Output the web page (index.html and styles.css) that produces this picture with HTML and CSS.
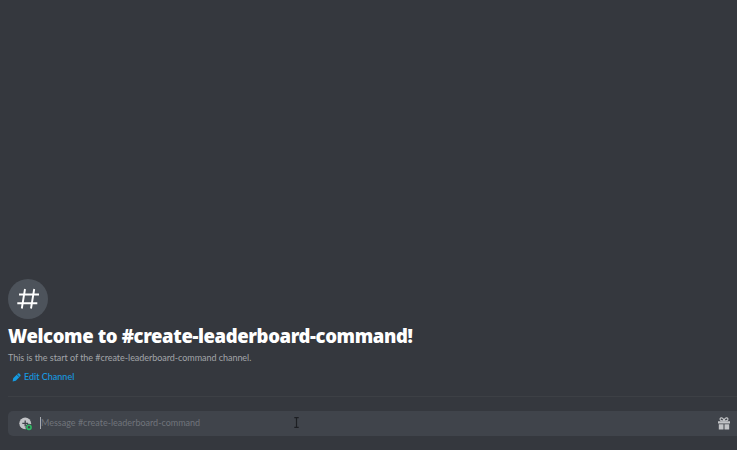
FILE: index.html
```
<!DOCTYPE html>
<html lang="en">
<head>
<meta charset="utf-8">
<title>create-leaderboard-command</title>
<link rel="stylesheet" href="styles.css">
</head>
<body>
<main class="chat">
  <section class="welcome">
    <div class="channel-icon">
      <svg width="40" height="40" viewBox="0 0 40 40" fill="none" stroke="#fff" stroke-width="1.9"><path d="M17 10 13.8 29.5M26.2 10 23 29.5M11 15.5h20M9.3 24.2h20"/></svg>
    </div>
    <h1 class="title">Welcome to #create-leaderboard-command!</h1>
    <p class="intro">This is the start of the #create-leaderboard-command channel.</p>
    <a class="edit">
      <svg width="9" height="9" viewBox="0 0 9 9" fill="#159ae0"><path d="M.6 8.4 1.2 5.2 4.7 1.7 7.3 4.3 3.8 7.8ZM5.1 1.3 6 .5Q6.8 0 7.6.8L8.2 1.4Q9 2.2 8.5 3L7.7 3.9Z"/></svg>
      <span class="edit-label">Edit Channel</span>
    </a>
  </section>
  <hr class="divider">
  <div class="composer">
    <svg class="attach" width="15" height="15" viewBox="0 0 15 15">
      <circle cx="6.2" cy="6.3" r="5.9" fill="#c2c4c7"/>
      <path d="M6.2 3.4v5.8M3.3 6.3h5.8" stroke="#40444b" stroke-width="1.3"/>
      <circle cx="10" cy="10.3" r="3.5" fill="#40444b"/>
      <circle cx="10" cy="10.3" r="2.1" fill="none" stroke="#2fb864" stroke-width="1.6"/>
    </svg>
    <span class="caret"></span>
    <span class="placeholder">Message #create-leaderboard-command</span>
    <svg class="pointer" width="5" height="11" viewBox="0 0 5 11" fill="none" stroke="#1d1f23"><path d="M.3.7h4.4M2.5.7v9.6M.3 10.3h4.4" stroke-width="1.2"/></svg>
    <svg class="gift" width="12" height="13" viewBox="0 0 12 13" fill="#c2c4c7">
      <path d="M0 4.3h12v2.2H0zM.8 7.3h4.7v5.2H.8zM6.5 7.3h4.7v5.2H6.5z"/>
      <path d="M5.8 4C2.8 4 2 3.2 2.1 2.1 2.3.2 5.2.4 5.8 3.3H6.2C6.8.4 9.7.2 9.9 2.1 10 3.2 9.2 4 6.2 4Z" fill="none" stroke="#c2c4c7" stroke-width="1.2"/>
    </svg>
  </div>
</main>
</body>
</html>
```
FILE: styles.css
```
* { box-sizing: border-box; }
body {
  margin: 0;
  background: #35383e;
  font-family: Lato, "Open Sans", sans-serif;
}
.chat {
  height: 450px;
  padding: 0 0 14px 8px;
  display: flex;
  flex-direction: column;
  justify-content: flex-end;
  overflow: hidden;
  white-space: nowrap;
}
.channel-icon {
  width: 40px;
  height: 40px;
  border-radius: 50%;
  background: #4d535b;
}
.channel-icon svg { display: block; }
.title {
  margin: 5px 0 0;
  font-family: "Noto Sans", sans-serif;
  font-size: 18.5px;
  line-height: 24px;
  font-weight: 900;
  letter-spacing: -0.38px;
  color: #fff;
}
.intro {
  margin: 4px 0 0;
  font-size: 9px;
  line-height: 12px;
  letter-spacing: -0.04px;
  color: #a2a5a9;
}
.edit {
  display: flex;
  align-items: center;
  gap: 3px;
  margin-top: 6px;
  padding-left: 4px;
  height: 14px;
  font-size: 9px;
  font-weight: 500;
  color: #159ae0;
}
.edit-label { margin-top: -2px; }
.divider {
  width: 100%;
  height: 1px;
  margin: 12px 0 14px;
  border: 0;
  background: #3d4045;
}
.composer {
  position: relative;
  display: flex;
  align-items: center;
  height: 25px;
  padding: 0 7px 0 11px;
  border-radius: 5px 0 0 5px;
  background: #40444b;
}
.attach { margin-top: 1px; }
.caret {
  width: 1px;
  height: 12px;
  margin: -1px 0 0 6px;
  background: #a8abb0;
}
.placeholder {
  margin-top: -2px;
  font-size: 9px;
  color: #70747b;
}
.gift { margin: -1px 0 0 auto; }
.pointer {
  position: absolute;
  left: 286px;
  top: 6px;
}
```
